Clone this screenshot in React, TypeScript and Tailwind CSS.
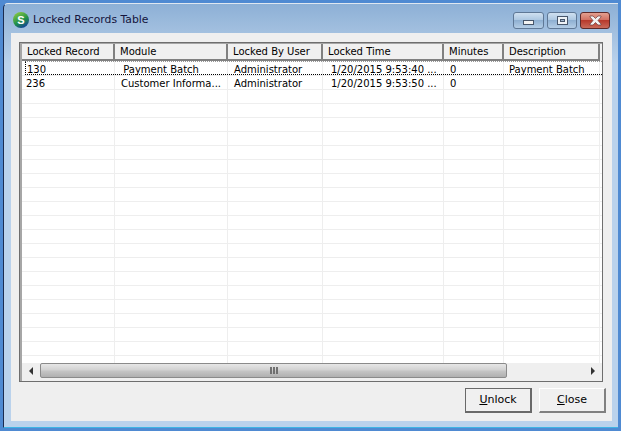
import React from "react";

const font = "font-['DejaVu_Sans',sans-serif]";

const columns = [
  { title: "Locked Record", width: "w-[93px]", pad: "pl-[5px]" },
  { title: "Module", width: "w-[113px]", pad: "pl-[5px]" },
  { title: "Locked By User", width: "w-[95px]", pad: "pl-[5px]" },
  { title: "Locked Time", width: "w-[121px]", pad: "pl-[5px]" },
  { title: "Minutes", width: "w-[60px]", pad: "pl-[5px]" },
  { title: "Description", width: "w-[96px]", pad: "pl-[5px]" },
];

const cellPads = ["pl-[4px]", "pl-[6px]", "pl-[6px]", "pl-[8px]", "pl-[6px]", "pl-[5px]"];
const firstRowPads = ["pl-[5px]", "pl-[5px]", "pl-[6px]", "pl-[8px]", "pl-[6px]", "pl-[5px]"];

const rows = [
  ["130", "\u00a0Payment Batch", "Administrator", "1/20/2015 9:53:40 ...", "0", "Payment Batch"],
  ["236", "Customer Informa...", "Administrator", "1/20/2015 9:53:50 ...", "0", ""],
  ...Array.from({ length: 20 }, () => ["", "", "", "", "", ""]),
];

const Row = ({ cells, index }: { cells: string[]; index: number }) => (
  <div className={`flex shrink-0 border-b border-[#eeeeee] ${index === 0 ? "h-[15px]" : "h-[14px]"}`}>
    {cells.map((text, i) => (
      <div
        key={i}
        className={`${columns[i].width} ${index === 0 ? firstRowPads[i] : cellPads[i]} h-full border-r border-[#eeeeee] truncate ${index === 0 ? "leading-[17px]" : "leading-[15px]"} text-black`}
      >
        {text}
      </div>
    ))}
  </div>
);

const WinButton = ({ className, children }: { className: string; children: React.ReactNode }) => (
  <div className={`flex h-[17px] items-center justify-center rounded-[3px] border ${className}`}>
    {children}
  </div>
);

const Button = ({ className, first, rest }: { className: string; first: string; rest: string }) => (
  <div className={`flex h-[25px] w-[67px] items-center justify-center bg-[#f0f0f0] text-[11px] text-black ${className}`}>
    <span>
      <u>{first}</u>
      {rest}
    </span>
  </div>
);

const App = () => {
  return (
    <div className={`${font} h-[431px] w-[621px] overflow-hidden bg-[#4f8ad2] pl-[3px] pr-[3px] pb-[3px] pt-[3px] text-[10px]`}>
      <div className="flex h-[425px] flex-col rounded-tl-[5px] border-t border-l border-b border-t-[#dfe7f0] border-l-[#1c2c50] border-b-[#3fb4e4] bg-[linear-gradient(to_bottom,#8db0d6,#a4c1e0_30px,#bad2ec_60px)]">
        <div className="flex h-[29px] shrink-0 items-center pl-[9px] pr-[8px] pt-[3px]">
          <svg width="16" height="16" viewBox="0 0 16 16" className="mr-[4px] shrink-0">
            <defs>
              <linearGradient id="logo" x1="0.2" y1="0.1" x2="0.7" y2="1">
                <stop offset="0" stopColor="#7cc242" />
                <stop offset="0.55" stopColor="#1f8f4a" />
                <stop offset="1" stopColor="#123f9f" />
              </linearGradient>
            </defs>
            <circle cx="8" cy="8" r="8" fill="url(#logo)" />
            <text x="8" y="11.6" textAnchor="middle" fontSize="11" fontWeight="700" fill="#ffffff" fontFamily="Liberation Sans">S</text>
          </svg>
          <span className="pt-[1px] text-[10.8px] text-[#14143c]">Locked Records Table</span>
          <div className="ml-auto flex gap-[3px]">
            <WinButton className="w-[31px] border-[#5f7896] bg-[linear-gradient(to_bottom,#cfe0f0,#aec8e2_45%,#8fb0d2_50%,#b4cde6)]">
              <div className="mt-[5px] h-[5px] w-[11px] border border-[#47566b] bg-[#f2f2f2]" />
            </WinButton>
            <WinButton className="w-[30px] border-[#5f7896] bg-[linear-gradient(to_bottom,#cfe0f0,#aec8e2_45%,#8fb0d2_50%,#b4cde6)]">
              <div className="flex h-[9px] w-[11px] items-center justify-center border border-[#47566b] bg-[#eef2f6]">
                <div className="h-[3px] w-[5px] border border-[#47566b] bg-[#9fb4cc]" />
              </div>
            </WinButton>
            <WinButton className="w-[30px] border-[#5e2a2a] bg-[linear-gradient(to_bottom,#e3a090,#d27263_45%,#b83a2c_50%,#c96a5a)]">
              <svg width="15" height="11" viewBox="0 0 15 11">
                <path d="M2 1h3l2.500 2.500L10 1h3v1L10 5.500 13 9v1h-3L7.500 7.500 5 10H2V9l3-3.500L2 2z" fill="#f3f3f3" stroke="#6b3b3b" strokeWidth="0.7" />
              </svg>
            </WinButton>
          </div>
        </div>

        <div className="ml-[7px] mr-[6px] flex h-[388px] flex-col bg-[#efefef] pl-[8px] pr-[9px] pt-[9px]">
          <div className="h-[340px] shrink-0 border border-[#6e6e6e]">
            <div className="flex h-full flex-col border-l-2 border-t border-[#a6a6a6] bg-white">
              <div className="flex h-[17px] shrink-0 bg-[#f0f0f0]">
                {columns.map((c) => (
                  <div
                    key={c.title}
                    className={`${c.width} ${c.pad} flex items-center border-b-2 border-r-2 border-[#808080] text-black`}
                  >
                    {c.title}
                  </div>
                ))}
              </div>
              <div className="relative h-[302px] shrink-0 overflow-hidden">
                {rows.map((cells, i) => (
                  <Row key={i} cells={cells} index={i} />
                ))}
                <div className="absolute left-[3px] right-0 top-0 h-[14px] border-t border-b border-l border-dotted border-t-[#9a9a9a] border-b-black border-l-black" />
              </div>
              <div className="flex h-[18px] shrink-0 bg-[#efefef]">
                <div className="flex h-[15px] w-[18px] items-center justify-center">
                  <div className="h-0 w-0 border-y-[4px] border-r-[4px] border-y-transparent border-r-[#333333]" />
                </div>
                <div className="flex h-[15px] w-[467px] items-center justify-center rounded-[2px] border border-[#8a8a8a] bg-[linear-gradient(to_bottom,#e6e6e6,#d2d2d2_45%,#c4c4c4_55%,#b0b0b0)]">
                  <div className="flex gap-[1px]">
                    <div className="h-[7px] w-[2px] bg-[#707070]" />
                    <div className="h-[7px] w-[2px] bg-[#707070]" />
                    <div className="h-[7px] w-[2px] bg-[#707070]" />
                  </div>
                </div>
                <div className="flex h-[15px] flex-1 items-center justify-end pr-[7px]">
                  <div className="h-0 w-0 border-y-[4px] border-l-[4px] border-y-transparent border-l-[#333333]" />
                </div>
              </div>
            </div>
          </div>
          <div className="mt-[6px] flex justify-end gap-[7px] pr-[6px] -mr-[9px]">
            <Button className="border border-r-2 border-b-2 border-[#696969]" first="U" rest="nlock" />
            <Button className="border border-r-2 border-b-2 border-l-white border-t-white border-r-[#808080] border-b-[#808080]" first="C" rest="lose" />
          </div>
        </div>
      </div>
    </div>
  );
};

export default App;
